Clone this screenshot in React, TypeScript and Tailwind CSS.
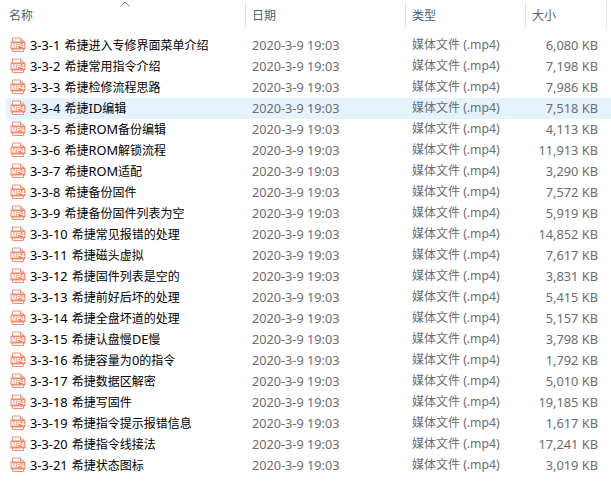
const files = [
  ['3-3-1 希捷进入专修界面菜单介绍', '6,080 KB'],
  ['3-3-2 希捷常用指令介绍', '7,198 KB'],
  ['3-3-3 希捷检修流程思路', '7,986 KB'],
  ['3-3-4 希捷ID编辑', '7,518 KB'],
  ['3-3-5 希捷ROM备份编辑', '4,113 KB'],
  ['3-3-6 希捷ROM解锁流程', '11,913 KB'],
  ['3-3-7 希捷ROM适配', '3,290 KB'],
  ['3-3-8 希捷备份固件', '7,572 KB'],
  ['3-3-9 希捷备份固件列表为空', '5,919 KB'],
  ['3-3-10 希捷常见报错的处理', '14,852 KB'],
  ['3-3-11 希捷磁头虚拟', '7,617 KB'],
  ['3-3-12 希捷固件列表是空的', '3,831 KB'],
  ['3-3-13 希捷前好后坏的处理', '5,415 KB'],
  ['3-3-14 希捷全盘坏道的处理', '5,157 KB'],
  ['3-3-15 希捷认盘慢DE慢', '3,798 KB'],
  ['3-3-16 希捷容量为0的指令', '1,792 KB'],
  ['3-3-17 希捷数据区解密', '5,010 KB'],
  ['3-3-18 希捷写固件', '19,185 KB'],
  ['3-3-19 希捷指令提示报错信息', '1,617 KB'],
  ['3-3-20 希捷指令线接法', '17,241 KB'],
  ['3-3-21 希捷状态图标', '3,019 KB'],
]

function Mp4Icon() {
  return (
    <svg width="16" height="16" viewBox="0 0 16 16" className="shrink-0">
      <path d="M2.5 1h8l3 3v10.5h-11z" fill="#fff" stroke="#f29078" strokeLinejoin="round" />
      <path d="M10.5 1v3h3" fill="#fde3da" stroke="#f29078" />
      <rect x="0.5" y="4.5" width="15" height="8" rx="1" fill="#f08a70" />
      <text x="8" y="10.9" textAnchor="middle" fontSize="6.5" fontWeight="700" fill="#fff" fontFamily="'Liberation Sans', sans-serif">MP4</text>
    </svg>
  )
}

// latin runs sit a bit larger than the cjk ones
function Mixed({ text, latin }: { text: string; latin: string }) {
  return (
    <>
      {text.split(/([\x20-\x7e]+)/).map((part, i) =>
        i % 2 === 1 ? <span key={i} className={latin}>{part}</span> : part
      )}
    </>
  )
}

function HeaderCell({ label, className }: { label: string; className: string }) {
  return (
    <div className={`flex h-[27px] items-center border-r border-[#e5e5e5] ${className}`}>
      <span>{label}</span>
    </div>
  )
}

export default function App() {
  return (
    <div className="relative h-[498px] w-[611px] overflow-hidden bg-white font-['Noto_Sans','Noto_Sans_CJK_SC',sans-serif] text-xs">
      <svg width="12" height="6" viewBox="0 0 12 6" className="absolute left-[119px] top-[1px]">
        <path d="M1.5 5.5 6 1l4.5 4.5" fill="none" stroke="#8a8a8a" />
      </svg>
      <div className="flex pt-[2px] text-[#4c607a]">
        <HeaderCell label="名称" className="w-[246px] pl-[9px]" />
        <HeaderCell label="日期" className="w-[160px] pl-[6px]" />
        <HeaderCell label="类型" className="w-[120px] pl-[6px]" />
        <HeaderCell label="大小" className="w-[81px] pl-[6px]" />
      </div>
      <div className="mt-[6px] flex flex-col">
        {files.map(([name, size], i) => (
          <div key={name} className={`ml-[6px] flex h-[21px] items-center ${i === 3 ? 'bg-[#e5f3ff]' : ''}`}>
            <div className="flex w-[246px] items-center gap-[4px] pl-[4px] pr-2">
              <Mp4Icon />
              <span className="whitespace-nowrap text-black [word-spacing:1px]">
                <Mixed text={name} latin="text-[12.8px]" />
              </span>
            </div>
            <span className="w-[160px] text-[12.7px] text-[#6d6d6d]">2020-3-9 19:03</span>
            <span className="w-[120px] whitespace-nowrap text-[#6d6d6d]">
              <Mixed text="媒体文件 (.mp4)" latin="text-[12.2px]" />
            </span>
            <span className="w-[66px] text-right text-[12.8px] text-[#6d6d6d]">{size}</span>
          </div>
        ))}
      </div>
    </div>
  )
}
